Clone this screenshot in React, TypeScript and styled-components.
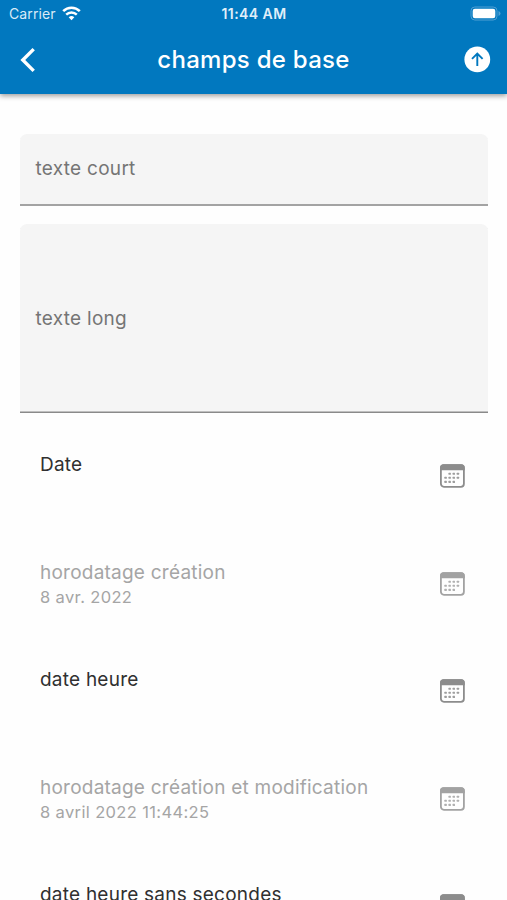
import React from "react";
import styled, { createGlobalStyle } from "styled-components";

const GlobalStyle = createGlobalStyle`
  *, *::before, *::after { box-sizing: border-box; }
  html, body { margin: 0; height: 900px; overflow: hidden; background: #fefefe; }
  body { font-family: Inter, "Liberation Sans", sans-serif; }
`;

const Screen = styled.div`
  width: 507px;
  height: 900px;
  overflow: hidden;
  background: #fefefe;
`;

const Header = styled.header`
  height: 94px;
  background: #0178bf;
  color: #fff;
  box-shadow: 0 2px 5px rgba(0, 0, 0, 0.38);
`;

const StatusBar = styled.div`
  display: grid;
  grid-template-columns: 1fr auto 1fr;
  align-items: center;
  height: 27px;
  padding: 0 8px 0 9px;
  line-height: 18px;
`;

const Carrier = styled.div`
  display: flex;
  align-items: center;
  gap: 6px;
  font-size: 14px;
  letter-spacing: 0.12px;
  color: #d9ebf7;
`;

const Clock = styled.div`
  font-size: 14px;
  font-weight: 600;
  letter-spacing: 0.45px;
  color: #e0eff9;
`;

const Battery = styled.svg`
  justify-self: end;
  margin-right: -2px;
`;

const NavBar = styled.nav`
  display: grid;
  grid-template-columns: 60px 1fr 60px;
  align-items: center;
  height: 65px;
`;

const NavButton = styled.button<{ $side: "left" | "right" }>`
  display: flex;
  justify-self: ${(p) => (p.$side === "left" ? "start" : "end")};
  margin: 0 ${(p) => (p.$side === "left" ? "0 0 18px" : "16px 0 0")};
  padding: 0;
  border: 0;
  background: none;
`;

const Title = styled.h1`
  margin: 0;
  text-align: center;
  font-size: 24px;
  line-height: 32px;
  font-weight: 500;
  letter-spacing: 0.28px;
`;

const Form = styled.main`
  display: flex;
  flex-direction: column;
  gap: 18px;
  padding: 40px 19px 0 20px;
`;

const Field = styled.div<{ $height: number; $bottom: number; $line: string; $color: string }>`
  display: flex;
  align-items: center;
  height: ${(p) => p.$height}px;
  padding: 0 15px ${(p) => p.$bottom}px 15.5px;
  border-radius: 7px 7px 0 0;
  background: #f5f5f5;
  box-shadow: inset 0 -${(p) => p.$line} 0 ${(p) => p.$color};
  color: #757575;
  font-size: 19px;
  line-height: 26px;
  letter-spacing: 0.28px;
`;

const Rows = styled.div`
  display: flex;
  flex-direction: column;
  margin-top: 20px;
`;

const Row = styled.div<{ $disabled?: boolean }>`
  display: flex;
  flex: none;
  align-items: flex-start;
  justify-content: space-between;
  height: 107.5px;
  padding: 1px 22.5px 0 20px;
  color: ${(p) => (p.$disabled ? "#a5a5a5" : "#303030")};
`;

const Label = styled.div`
  font-size: 19px;
  line-height: 26px;
  letter-spacing: 0.23px;
  white-space: nowrap;
`;

const Value = styled.div`
  font-size: 16.5px;
  line-height: 24px;
  margin-top: -1px;
  letter-spacing: 0.36px;
`;

const CalendarSvg = styled.svg<{ $muted?: boolean }>`
  flex: none;
  margin-top: 12px;
  overflow: visible;
  color: ${(p) => (p.$muted ? "#a2a2a2" : "#8c8c8c")};
`;

const DOTS = [
  [10, 9.7], [14.1, 9.7], [18.2, 9.7],
  [5.9, 13.7], [10, 13.7], [14.1, 13.7], [18.2, 13.7],
  [5.9, 17.8], [10, 17.8], [14.1, 17.8],
];

function CalendarIcon({ muted }: { muted?: boolean }) {
  return (
    <CalendarSvg $muted={muted} width="26" height="24" viewBox="0.5 0 26 24" fill="none">
      <rect x="1.4" y="1.2" width="23" height="21.6" rx="3" stroke="currentColor" strokeWidth="1.8" />
      <path d="M.5 6.3V4A3.7 3.7 0 0 1 4.2.3h17.4A3.7 3.7 0 0 1 25.3 4v2.3z" fill="currentColor" />
      {DOTS.map(([x, y]) => (
        <rect key={`${x}-${y}`} x={x - 1} y={y - 1} width="2.4" height="2.1" rx=".5" fill="currentColor" opacity=".85" />
      ))}
    </CalendarSvg>
  );
}

const ITEMS: { label: string; value?: string; disabled?: boolean }[] = [
  { label: "Date" },
  { label: "horodatage création", value: "8 avr. 2022", disabled: true },
  { label: "date heure" },
  { label: "horodatage création et modification", value: "8 avril 2022 11:44:25", disabled: true },
  { label: "date heure sans secondes" },
];

export default function App() {
  return (
    <>
      <GlobalStyle />
      <Screen>
        <Header>
          <StatusBar>
            <Carrier>
              Carrier
              <svg width="19" height="15" viewBox="0 0 19 15" fill="none" stroke="#fff">
                <path d="M1.2 5.2a11.8 11.8 0 0 1 16.6 0" strokeWidth="2.6" />
                <path d="M4.2 8.7a7.5 7.5 0 0 1 10.6 0" strokeWidth="2.4" />
                <path d="M6.7 11.3a4 4 0 0 1 5.6 0L9.5 14.2z" fill="#fff" stroke="none" />
              </svg>
            </Carrier>
            <Clock>11:44 AM</Clock>
            <Battery width="31" height="15" viewBox="0 0 31 15" fill="none">
              <rect x="1" y="1" width="26" height="13" rx="3.8" stroke="#519fd3" strokeWidth="1" />
              <rect x="2.7" y="2.8" width="22.6" height="9.4" rx="2.2" fill="#fff" />
              <path d="M28.5 5v5q2-.7 2-2.5t-2-2.5z" fill="#519fd3" />
            </Battery>
          </StatusBar>
          <NavBar>
            <NavButton $side="left" aria-label="Retour">
              <svg width="20" height="26" viewBox="0 0 20 26" fill="none">
                <path d="M15.7 2.1 4.8 13l10.9 10.9" stroke="#fff" strokeWidth="3.4" />
              </svg>
            </NavButton>
            <Title>champs de base</Title>
            <NavButton $side="right" aria-label="Envoyer">
              <svg width="27" height="27" viewBox="0 0 27 27" fill="none">
                <circle cx="13.3" cy="13.4" r="12.9" fill="#fff" />
                <path d="M13.3 19.9V7.9M8 12.9l5.3-5.3 5.3 5.3" stroke="#0178bf" strokeWidth="1.9" />
              </svg>
            </NavButton>
          </NavBar>
        </Header>
        <Form>
          <Field $height={72} $bottom={2} $line="2px" $color="#a3a3a3">texte court</Field>
          <Field $height={189} $bottom={0} $line="1.5px" $color="#8a8a8a">texte long</Field>
          <Rows>
            {ITEMS.map((item) => (
              <Row key={item.label} $disabled={item.disabled}>
                <div>
                  <Label>{item.label}</Label>
                  {item.value && <Value>{item.value}</Value>}
                </div>
                <CalendarIcon muted={item.disabled} />
              </Row>
            ))}
          </Rows>
        </Form>
      </Screen>
    </>
  );
}
